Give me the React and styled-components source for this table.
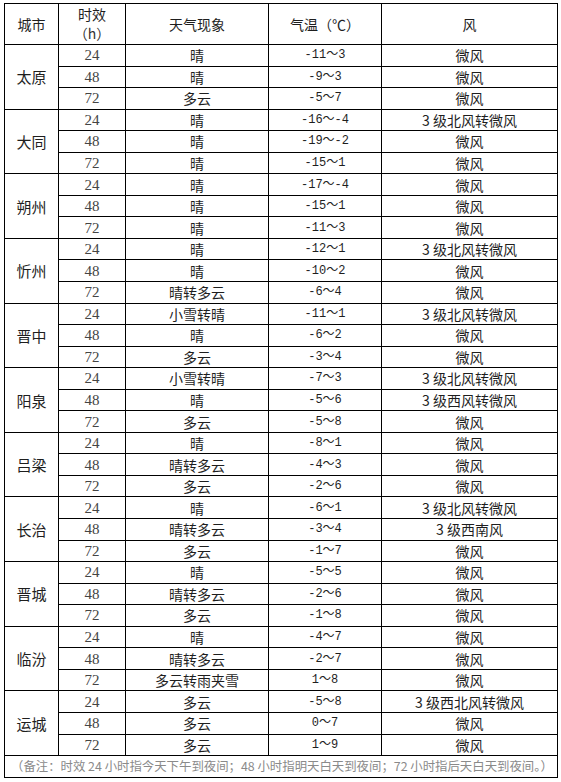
import React from "react";
import styled, { createGlobalStyle } from "styled-components";

const GlobalStyle = createGlobalStyle`
  html, body {
    margin: 0;
    padding: 0;
    background: #ffffff;
  }
`;

const forecast = [
  { city: "太原", rows: [["24", "晴", "-11～3", "微风"], ["48", "晴", "-9～3", "微风"], ["72", "多云", "-5～7", "微风"]] },
  { city: "大同", rows: [["24", "晴", "-16～-4", "3 级北风转微风"], ["48", "晴", "-19～-2", "微风"], ["72", "晴", "-15～1", "微风"]] },
  { city: "朔州", rows: [["24", "晴", "-17～-4", "微风"], ["48", "晴", "-15～1", "微风"], ["72", "晴", "-11～3", "微风"]] },
  { city: "忻州", rows: [["24", "晴", "-12～1", "3 级北风转微风"], ["48", "晴", "-10～2", "微风"], ["72", "晴转多云", "-6～4", "微风"]] },
  { city: "晋中", rows: [["24", "小雪转晴", "-11～1", "3 级北风转微风"], ["48", "晴", "-6～2", "微风"], ["72", "多云", "-3～4", "微风"]] },
  { city: "阳泉", rows: [["24", "小雪转晴", "-7～3", "3 级北风转微风"], ["48", "晴", "-5～6", "3 级西风转微风"], ["72", "多云", "-5～8", "微风"]] },
  { city: "吕梁", rows: [["24", "晴", "-8～1", "微风"], ["48", "晴转多云", "-4～3", "微风"], ["72", "多云", "-2～6", "微风"]] },
  { city: "长治", rows: [["24", "晴", "-6～1", "3 级北风转微风"], ["48", "晴转多云", "-3～4", "3 级西南风"], ["72", "多云", "-1～7", "微风"]] },
  { city: "晋城", rows: [["24", "晴", "-5～5", "微风"], ["48", "晴转多云", "-2～6", "微风"], ["72", "多云", "-1～8", "微风"]] },
  { city: "临汾", rows: [["24", "晴", "-4～7", "微风"], ["48", "晴转多云", "-2～7", "微风"], ["72", "多云转雨夹雪", "1～8", "微风"]] },
  { city: "运城", rows: [["24", "多云", "-5～8", "3 级西北风转微风"], ["48", "多云", "0～7", "微风"], ["72", "多云", "1～9", "微风"]] },
];

export default function App() {
  return (
    <Page>
      <GlobalStyle />
      <Table>
        <colgroup>
          <col style={{ width: 54 }} />
          <col style={{ width: 67 }} />
          <col style={{ width: 143 }} />
          <col style={{ width: 113 }} />
          <col style={{ width: 176 }} />
        </colgroup>
        <thead>
          <HeadRow>
            <HeadCell>城市</HeadCell>
            <HeadCell>
              时效
              <br />
              <Unit>（h）</Unit>
            </HeadCell>
            <HeadCell>天气现象</HeadCell>
            <HeadCell>气温（℃）</HeadCell>
            <HeadCell>风</HeadCell>
          </HeadRow>
        </thead>
        <tbody>
          {forecast.map((item) =>
            item.rows.map((r, i) => (
              <Row key={item.city + r[0]}>
                {i === 0 && <CityCell rowSpan={3}>{item.city}</CityCell>}
                <Cell $font="serif">{r[0]}</Cell>
                <Cell>{r[1]}</Cell>
                <Cell $font="mono">{r[2]}</Cell>
                <Cell>{r[3]}</Cell>
              </Row>
            ))
          )}
          <Row>
            <NoteCell colSpan={5}>
              （备注：时效 24 小时指今天下午到夜间；48 小时指明天白天到夜间；72 小时指后天白天到夜间。）
            </NoteCell>
          </Row>
        </tbody>
      </Table>
    </Page>
  );
}

const Page = styled.div`
  padding: 3px 0 0 4px;
`;

const Table = styled.table`
  border-collapse: collapse;
  table-layout: fixed;
  width: 553px;
  color: #1e1e1e;
  font-family: "Noto Sans CJK SC", sans-serif;
  font-size: 14px;
`;

const HeadRow = styled.tr`
  height: 41px;
`;

const HeadCell = styled.th`
  border: 1px solid #000;
  font-weight: normal;
  text-align: center;
  padding: 0;
  line-height: 19px;
  font-size: 14px;
`;

const Unit = styled.span`
  font-family: "Noto Sans CJK SC", serif;
  font-size: 14px;
  color: #333;
`;

const Row = styled.tr`
  height: 21.55px;
`;

const CityCell = styled.td`
  border: 1px solid #000;
  text-align: center;
  padding: 0;
  font-size: 15px;
`;

const Cell = styled.td`
  border: 1px solid #000;
  text-align: center;
  padding: 0;
  line-height: 18px;
  white-space: nowrap;
  font-family: ${(p) =>
    p.$font === "serif"
      ? '"Liberation Serif", serif'
      : p.$font === "mono"
      ? '"Liberation Mono", "Noto Sans CJK SC", monospace'
      : '"Noto Sans CJK SC", sans-serif'};
  font-size: ${(p) => (p.$font === "serif" ? "15px" : p.$font === "mono" ? "12px" : "14px")};
  color: ${(p) => (p.$font === "serif" ? "#444" : "#1e1e1e")};
`;

const NoteCell = styled.td`
  border: 1px solid #000;
  padding: 0 0 0 6px;
  text-align: left;
  white-space: nowrap;
  overflow: hidden;
  font-size: 12.4px;
  line-height: 18px;
  color: #8a8a8a;
`;
